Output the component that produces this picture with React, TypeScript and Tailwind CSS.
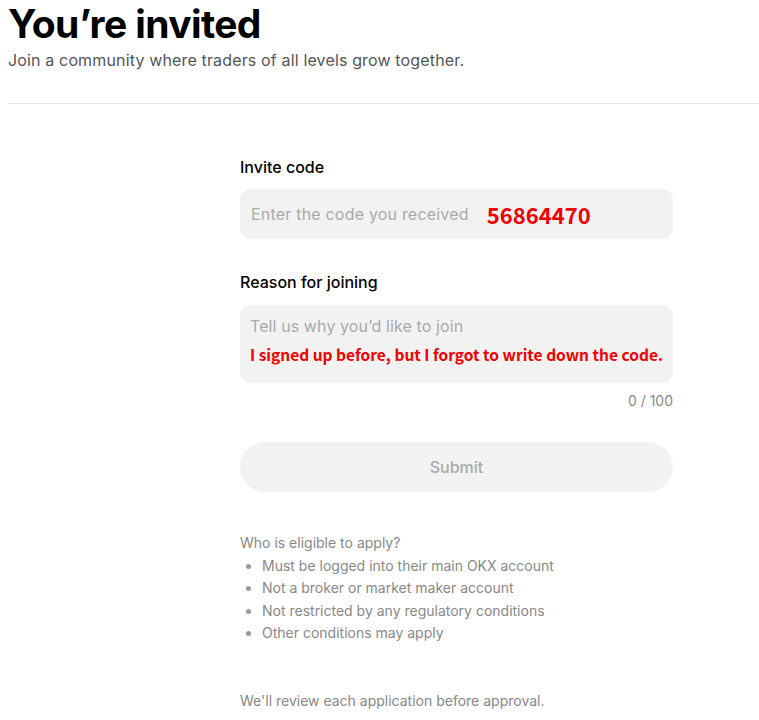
export default function App() {
  const rules = [
    "Must be logged into their main OKX account",
    "Not a broker or market maker account",
    "Not restricted by any regulatory conditions",
    "Other conditions may apply",
  ];

  return (
    <div className="min-h-[720px] bg-white font-['Inter',sans-serif] text-black">
      {/* Header */}
      <div className="px-2 pt-[3px]">
        <h1 className="text-[39px] font-bold leading-[42px] tracking-[-0.6px]">You’re invited</h1>
        <p className="mt-[4px] text-[16px] leading-[22px] tracking-[0.15px] text-[#555]">
          Join a community where traders of all levels grow together.
        </p>
      </div>
      <div className="ml-2 mt-[32px] border-t border-[#e8e8e8]" />

      {/* Form */}
      <div className="ml-[240px] mt-[52px] w-[433px]">
        <label className="block text-[16px] font-medium leading-[22px]">Invite code</label>
        <div className="mt-[11px] flex h-[50px] items-center rounded-[10px] bg-[#f2f2f2] px-[11px]">
          <span className="text-[16px] tracking-[0.2px] text-[#aaa]">Enter the code you received</span>
          <span className="ml-[18px] font-['Noto_Sans_CJK_KR',sans-serif] text-[22px] font-bold text-[#ee0000]">
            56864470
          </span>
        </div>

        <label className="mt-[32px] block text-[16px] font-medium leading-[22px]">Reason for joining</label>
        <div className="mt-[12px] h-[78px] rounded-[10px] bg-[#f2f2f2] px-[10px] pt-[10px]">
          <div className="text-[16px] leading-[22px] tracking-[0.1px] text-[#aaa]">Tell us why you’d like to join</div>
          <div className="mt-[6px] font-['Noto_Sans_CJK_KR',sans-serif] text-[15.5px] font-bold leading-[22px] text-[#ee0000]">
            I signed up before, but I forgot to write down the code.
          </div>
        </div>
        <div className="mt-[8px] text-right text-[14px] leading-[20px] text-[#888]">0 / 100</div>

        <button className="mt-[31px] h-[50px] w-full rounded-full bg-[#f2f2f2] text-[16px] font-medium text-[#aaa]">
          Submit
        </button>

        <div className="mt-[40px] text-[14px] leading-[22.5px] text-[#888]">
          <div>Who is eligible to apply?</div>
          <ul className="list-disc pl-[22px] marker:text-[#999]">
            {rules.map((r) => (
              <li key={r}>{r}</li>
            ))}
          </ul>
          <p className="mt-[45px]">We'll review each application before approval.</p>
        </div>
      </div>
    </div>
  );
}
